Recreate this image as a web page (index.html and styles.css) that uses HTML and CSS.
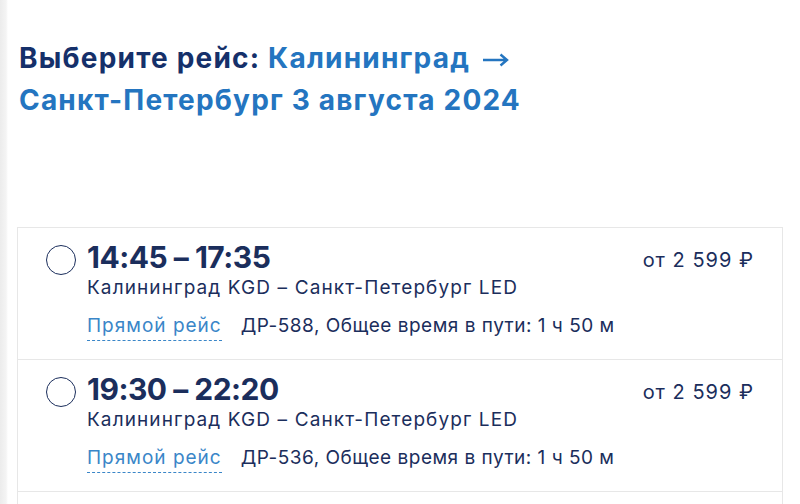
FILE: index.html
```html
<!DOCTYPE html>
<html>
<head>
  <title>Выбор рейса</title>
  <link rel="stylesheet" href="styles.css">
</head>
<body>
  <div class="page">
    <h1 class="title">
      <span class="title-label">Выберите рейс:</span>
      Калининград
      <svg class="title-arrow" width="27" height="14" viewBox="0 0 27 14">
        <path d="M1 7H25M18.5 1.5L25 7L18.5 12.5" fill="none" stroke="currentColor" stroke-width="2.4"/>
      </svg><br>Санкт-Петербург 3 августа 2024
    </h1>

    <ul class="flights">
      <li class="flight">
        <span class="radio"></span>
        <div class="flight-info">
          <div class="flight-time">14:45 – 17:35</div>
          <div class="flight-route">Калининград KGD – Санкт-Петербург LED</div>
          <div class="flight-meta">
            <span class="flight-type">Прямой рейс</span>
            <span class="flight-number">ДР-588, Общее время в пути: 1 ч 50 м</span>
          </div>
        </div>
        <div class="flight-price">от 2 599 ₽</div>
      </li>
      <li class="flight">
        <span class="radio"></span>
        <div class="flight-info">
          <div class="flight-time">19:30 – 22:20</div>
          <div class="flight-route">Калининград KGD – Санкт-Петербург LED</div>
          <div class="flight-meta">
            <span class="flight-type">Прямой рейс</span>
            <span class="flight-number">ДР-536, Общее время в пути: 1 ч 50 м</span>
          </div>
        </div>
        <div class="flight-price">от 2 599 ₽</div>
      </li>
      <li class="flight"></li>
    </ul>
  </div>
</body>
</html>
```

FILE: styles.css
```css
body {
  font-family: Inter, "Noto Sans", sans-serif;
  margin: 0;
  padding: 0;
  color: #1b2e5c;
  background: linear-gradient(to right, #ececec 0, #f4f4f4 6px, #fff 8px);
}

.page {
  padding: 37px 17px 0 17px;
}

.title {
  margin: 0 0 106px 2px;
  font-size: 28px;
  line-height: 42px;
  font-weight: 700;
  color: #2475c0;
  letter-spacing: 1.2px;
}

.title-label {
  color: #15306a;
}

.title-arrow {
  margin-left: 4px;
  vertical-align: 1px;
}

.flights {
  list-style: none;
  margin: 0;
  padding: 0;
  border: 1px solid #e7e7e7;
  border-bottom: none;
}

.flight {
  display: flex;
  align-items: flex-start;
  padding: 13px 28px 18px 28px;
  border-bottom: 1px solid #e7e7e7;
  background-color: #fff;
}

.radio {
  flex: none;
  width: 28px;
  height: 28px;
  margin-top: 4px;
  border: 1.5px solid #1b2e5c;
  border-radius: 50%;
}

.flight-info {
  margin-left: 11px;
}

.flight-time {
  font-size: 30px;
  line-height: 32px;
  font-weight: 700;
  letter-spacing: -0.5px;
}

.flight-route {
  margin-top: 3px;
  font-size: 19px;
  line-height: 24px;
  letter-spacing: 1.1px;
}

.flight-meta {
  display: flex;
  gap: 19px;
  margin-top: 14px;
  font-size: 19px;
  line-height: 24px;
  letter-spacing: 0.5px;
}

.flight-type {
  color: #3a86c8;
  border-bottom: 1.5px dashed #3a86c8;
  padding-bottom: 2px;
  letter-spacing: 1px;
}

.flight-price {
  margin-left: auto;
  margin-top: 5px;
  font-size: 20px;
  line-height: 28px;
  letter-spacing: 1px;
}
```
